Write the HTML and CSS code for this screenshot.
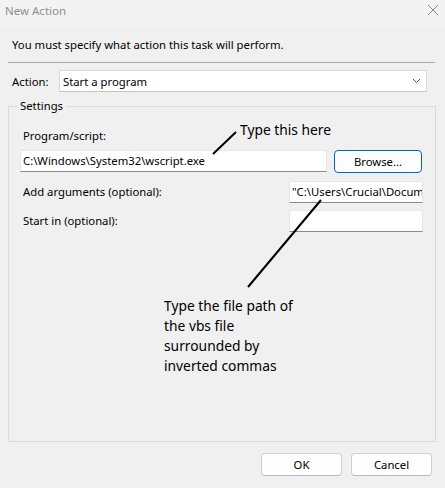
FILE: index.html
```html
<!DOCTYPE html>
<html>
<head>
<meta charset="utf-8">
<link rel="stylesheet" href="styles.css">
</head>
<body>
<div class="window">
  <div class="titlebar">
    <span class="title">New Action</span>
    <svg class="close" width="12" height="12" viewBox="0 0 12 12"><path d="M1 1 L11 11 M11 1 L1 11" stroke="#8a8a8a" stroke-width="1" fill="none"/></svg>
  </div>
  <div class="intro">You must specify what action this task will perform.</div>
  <div class="sep"></div>
  <div class="action-row">
    <span class="action-label">Action:</span>
    <div class="select">
      <span>Start a program</span>
      <svg width="9" height="6" viewBox="0 0 9 6"><path d="M1 1 L4.5 4.5 L8 1" stroke="#555" stroke-width="1" fill="none"/></svg>
    </div>
  </div>
  <fieldset class="settings">
    <legend>Settings</legend>
    <div class="label first">Program/script:</div>
    <div class="prog-row">
      <div class="field prog">C:\Windows\System32\wscript.exe</div>
      <div class="btn browse">Browse...</div>
    </div>
    <div class="arg-row">
      <span class="label">Add arguments (optional):</span>
      <div class="field small">"C:\Users\Crucial\Documents\script.vbs"</div>
    </div>
    <div class="arg-row second">
      <span class="label">Start in (optional):</span>
      <div class="field small"></div>
    </div>
  </fieldset>
  <div class="footer">
    <div class="btn ok">OK</div>
    <div class="btn cancel">Cancel</div>
  </div>
  <div class="note note-top">Type this here</div>
  <div class="note note-bottom">Type the file path of<br>the vbs file<br>surrounded by<br>inverted commas</div>
  <svg class="arrows" width="445" height="488" viewBox="0 0 445 488"><path d="M213 154 L236 132 M321 200 L248 287" stroke="#000" stroke-width="2" fill="none"/></svg>
</div>
</body>
</html>
```
FILE: styles.css
```css
html, body {
  margin: 0;
  padding: 0;
  background: #f0f0f0;
}
body {
  font-family: "Noto Sans", "Liberation Sans", sans-serif;
  font-size: 11.3px;
  color: #000;
}
.window {
  position: relative;
  width: 445px;
  height: 488px;
  overflow: hidden;
}
.titlebar {
  height: 26px;
  background: #f3f3f3;
  display: flex;
  justify-content: space-between;
  align-items: flex-start;
  padding: 0 6px 0 5px;
  box-sizing: border-box;
}
.title {
  line-height: 22px;
  color: #8f8f8f;
  font-size: 11.5px;
}
.close {
  margin-top: 4px;
}
.intro {
  margin: 11px 0 0 12px;
  line-height: 16px;
}
.sep {
  margin: 9px 10px 0 8px;
  border-top: 1px solid #a8a8a8;
}
.action-row {
  display: flex;
  align-items: center;
  margin-top: 7px;
  height: 22px;
}
.action-label {
  margin-left: 12px;
  width: 47px;
}
.select {
  width: 368px;
  height: 22px;
  box-sizing: border-box;
  background: #fff;
  border: 1px solid #d9d9d9;
  border-bottom-color: #c4c4c4;
  display: flex;
  align-items: center;
  justify-content: space-between;
  padding: 0 5px 0 3px;
}
.settings {
  margin: 6px 9px 0 8px;
  padding: 0 13px 0 11px;
  border: 1px solid #dadada;
  height: 344px;
  box-sizing: border-box;
}
.settings legend {
  padding: 0 3px;
  margin-left: -3px;
  line-height: 16px;
}
.label {
  margin-left: 3px;
  line-height: 16px;
}
.label.first {
  margin-top: 14px;
}
.field {
  background: #fff;
  box-sizing: border-box;
  border: 1px solid #e6e6e6;
  border-bottom-color: #8a8a8a;
  height: 22px;
  line-height: 20px;
  padding: 0 2px;
  white-space: nowrap;
  overflow: hidden;
}
.prog-row {
  display: flex;
  justify-content: space-between;
  margin-top: 6px;
  height: 23px;
}
.prog {
  width: 307px;
}
.btn {
  box-sizing: border-box;
  height: 23px;
  border: 1px solid #d0d0d0;
  border-bottom-color: #b8b8b8;
  border-radius: 4px;
  background: #fdfdfd;
  display: flex;
  align-items: center;
  justify-content: center;
}
.browse {
  width: 88px;
  border: 1px solid #0067c0;
}
.arg-row {
  display: flex;
  justify-content: space-between;
  align-items: center;
  margin-top: 8px;
  height: 22px;
}
.arg-row.second {
  margin-top: 7px;
}
.field.small {
  width: 134px;
  margin-right: -1px;
}
.footer {
  display: flex;
  justify-content: flex-end;
  gap: 9px;
  margin: 11px 13px 0 0;
}
.ok, .cancel {
  width: 81px;
}
.note {
  position: absolute;
  font-size: 13.8px;
  line-height: 20px;
}
.note-top {
  left: 240px;
  top: 120px;
}
.note-bottom {
  left: 164px;
  top: 296px;
}
.arrows {
  position: absolute;
  left: 0;
  top: 0;
  pointer-events: none;
}
```
